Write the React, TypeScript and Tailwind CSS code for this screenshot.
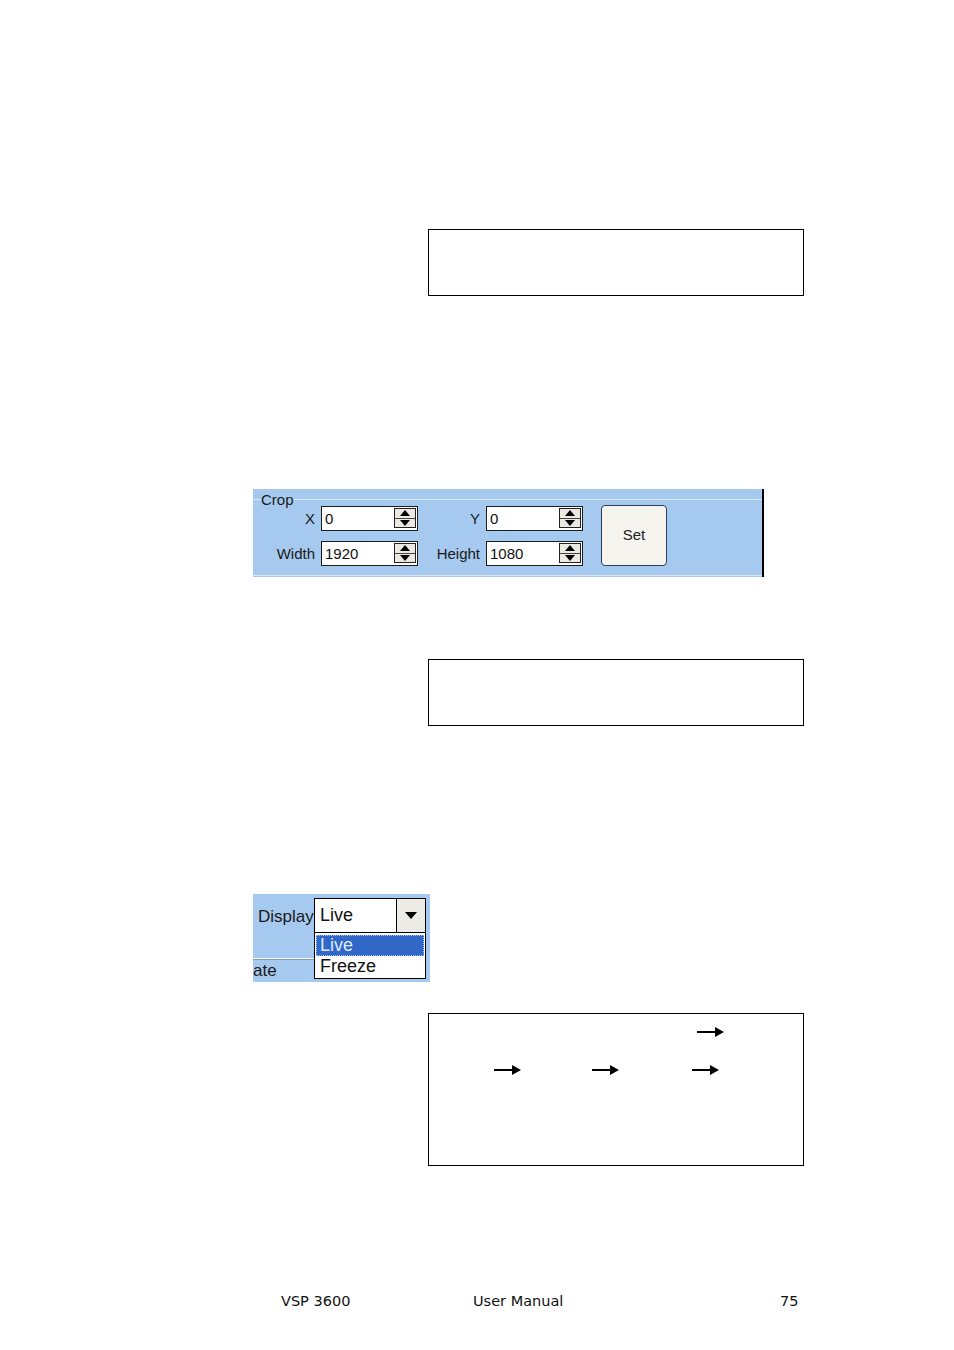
import React from "react";

const Arrow = () => (
  <svg width="27" height="10" viewBox="0 0 27 10" className="block">
    <rect x="0" y="4" width="19" height="2" fill="#000" />
    <polygon points="18,0 27,5 18,10" fill="#000" />
  </svg>
);

const Spinner = () => (
  <div className="flex h-[20px] w-[22px] flex-col border border-[#222] bg-[#ece9e2]">
    <div className="flex flex-1 items-center justify-center border-b border-[#444]">
      <svg width="10" height="6" viewBox="0 0 10 6">
        <polygon points="5,0 10,6 0,6" fill="#000" />
      </svg>
    </div>
    <div className="flex flex-1 items-center justify-center">
      <svg width="10" height="6" viewBox="0 0 10 6">
        <polygon points="0,0 10,0 5,6" fill="#000" />
      </svg>
    </div>
  </div>
);

interface FieldProps {
  label: string;
  value: string;
  labelWidth: string;
  inputWidth: string;
}

const Field: React.FC<FieldProps> = ({ label, value, labelWidth, inputWidth }) => (
  <div className="flex items-center">
    <span className={`${labelWidth} pr-[6px] text-right text-[15px] leading-none text-[#1a1a1a]`}>
      {label}
    </span>
    <div
      className={`${inputWidth} flex h-[25px] items-center justify-between border border-[#1c1c1c] bg-white pl-[3px] pr-[1px]`}
    >
      <span className="text-[15px] leading-none text-[#111]">{value}</span>
      <Spinner />
    </div>
  </div>
);

const TextBox: React.FC<{ h: string; children?: React.ReactNode }> = ({ h, children }) => (
  <div className={`ml-[428px] w-[376px] ${h} border border-black bg-white`}>{children}</div>
);

export default function App() {
  return (
    <div
      className="w-[954px] h-[1350px] bg-white overflow-hidden"
      style={{ fontFamily: '"Liberation Sans", Arial, sans-serif' }}
    >
      <div className="h-[229px]" />
      <TextBox h="h-[67px]" />

      {/* Crop panel */}
      <div className="mt-[193px] ml-[253px] flex h-[88px] w-[511px]">
        <div className="flex-1 bg-[#a6c9ef] pt-[3px]">
          <fieldset className="h-[84px] border-0 border-t border-b border-t-[#d8e6f6] border-b-[#dfe8f2] pl-[8px]">
            <legend className="px-0 text-[15px] leading-[15px] text-[#1a1a1a]">Crop</legend>
            <div className="-ml-[8px] -mt-[2px] flex items-center">
              <div className="flex flex-col gap-[10px]">
                <div className="flex">
                  <Field label="X" value="0" labelWidth="w-[68px]" inputWidth="w-[97px]" />
                  <Field label="Y" value="0" labelWidth="w-[68px]" inputWidth="w-[97px]" />
                </div>
                <div className="flex">
                  <Field label="Width" value="1920" labelWidth="w-[68px]" inputWidth="w-[97px]" />
                  <Field label="Height" value="1080" labelWidth="w-[68px]" inputWidth="w-[97px]" />
                </div>
              </div>
              <button className="ml-[18px] flex h-[61px] w-[66px] items-center justify-center rounded-[4px] border border-[#2c3e5a] bg-[#f5f4ef] text-[15px] text-[#222]">
                Set
              </button>
            </div>
          </fieldset>
        </div>
        <div className="w-[2px] bg-black" />
      </div>

      <div className="h-[82px]" />
      <TextBox h="h-[67px]" />

      {/* Display panel */}
      <div className="mt-[168px] ml-[253px] flex h-[88px] w-[177px] bg-[#a6c9ef]">
        <div className="flex w-[61px] flex-col">
          <div className="mt-[13px] pl-[5px] text-[17px] leading-[20px] text-[#1a1a1a]">Display</div>
          <div className="mt-[31px] border-t border-b border-t-[#f4f7fb] border-b-[#8c9db0]" />
          <div className="mt-[2px] text-[17px] leading-[17px] text-[#1a1a1a]">ate</div>
        </div>
        <div className="mt-[4px] flex w-[112px] flex-col">
          <div className="flex h-[35px] border border-black bg-white">
            <div className="flex flex-1 items-center pl-[5px] text-[18px] text-[#111]">Live</div>
            <div className="flex w-[29px] items-center justify-center border-l border-black bg-[#ecebe6]">
              <svg width="12" height="7" viewBox="0 0 12 7">
                <polygon points="0,0 12,0 6,7" fill="#000" />
              </svg>
            </div>
          </div>
          <div className="flex flex-col border border-t-0 border-black bg-white px-[1px] pt-[2px] pb-[1px]">
            <div className="h-[21px] border border-dotted border-[#9fc0ee] bg-[#3168c8] pl-[3px] text-[18px] leading-[19px] text-[#dfe9ff]">
              Live
            </div>
            <div className="h-[21px] pl-[4px] text-[18px] leading-[21px] text-[#111]">Freeze</div>
          </div>
        </div>
      </div>

      <div className="h-[31px]" />
      <TextBox h="h-[153px]">
        <div className="ml-[268px] mt-[13px]">
          <Arrow />
        </div>
        <div className="mt-[28px] flex">
          <div className="ml-[65px]">
            <Arrow />
          </div>
          <div className="ml-[71px]">
            <Arrow />
          </div>
          <div className="ml-[73px]">
            <Arrow />
          </div>
        </div>
      </TextBox>

      {/* Footer */}
      <div
        className="mt-[126px] flex text-[14.5px] leading-[18px] text-[#111]"
        style={{ fontFamily: '"DejaVu Sans", Verdana, sans-serif' }}
      >
        <span className="ml-[281px] w-[192px]">VSP 3600</span>
        <span className="w-[307px]">User Manual</span>
        <span>75</span>
      </div>
    </div>
  );
}
